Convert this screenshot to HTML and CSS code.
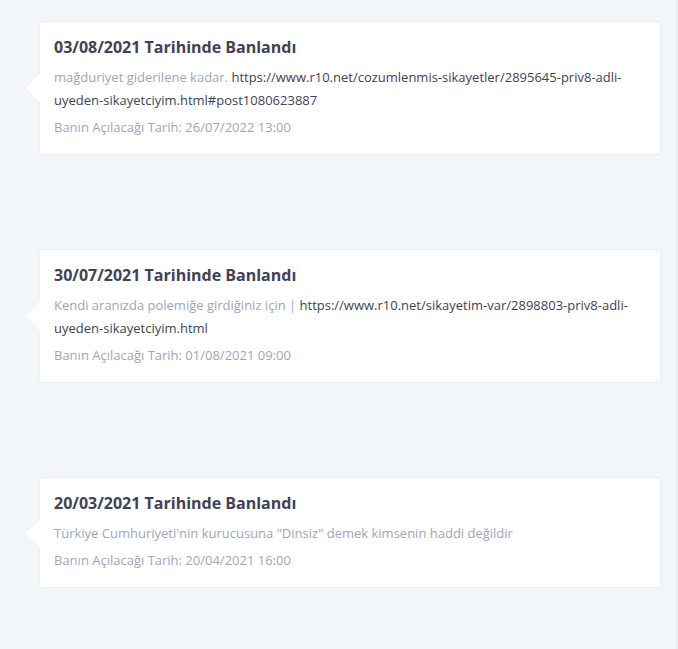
FILE: index.html
```html
<!DOCTYPE html>
<html lang="tr">
<head>
    <meta charset="UTF-8">
    <meta name="viewport" content="width=device-width, initial-scale=1.0">
    <title>Ban Geçmişi</title>
    <link rel="stylesheet" href="styles.css">
</head>
<body>

    <div class="timeline">

        <div class="ban-item">
            <h3 class="ban-title">03/08/2021 Tarihinde Banlandı</h3>
            <p class="ban-reason">mağduriyet giderilene kadar. <a href="#">https://www.r10.net/cozumlenmis-sikayetler/2895645-priv8-adli-uyeden-sikayetciyim.html#post1080623887</a></p>
            <p class="ban-date">Banın Açılacağı Tarih: 26/07/2022 13:00</p>
        </div>

        <div class="ban-item">
            <h3 class="ban-title">30/07/2021 Tarihinde Banlandı</h3>
            <p class="ban-reason">Kendi aranızda polemiğe girdiğiniz için | <a href="#">https://www.r10.net/sikayetim-var/2898803-priv8-adli-uyeden-sikayetciyim.html</a></p>
            <p class="ban-date">Banın Açılacağı Tarih: 01/08/2021 09:00</p>
        </div>

        <div class="ban-item">
            <h3 class="ban-title">20/03/2021 Tarihinde Banlandı</h3>
            <p class="ban-reason">Türkiye Cumhuriyeti'nin kurucusuna "Dinsiz" demek kimsenin haddi değildir</p>
            <p class="ban-date">Banın Açılacağı Tarih: 20/04/2021 16:00</p>
        </div>

    </div>

</body>
</html>
```

FILE: styles.css
```css
body {
    margin: 0;
    background-color: #f3f6f9;
    font-family: "Open Sans", Arial, sans-serif;
}

.timeline {
    width: 677px;
    min-height: 649px;
    box-sizing: border-box;
    padding: 21px 15px 0 39px;
    border-right: 1px solid #e4e8ee;
    display: flex;
    flex-direction: column;
    gap: 94px;
}

.ban-item {
    position: relative;
    background-color: #fff;
    border: 1px solid #ebedf2;
    border-radius: 3px;
    padding: 13px 15px 15px 14px;
}

/* little arrow on the left side of the card */
.ban-item::before {
    content: "";
    position: absolute;
    left: -14px;
    top: 50%;
    margin-top: -14px;
    border-top: 14px solid transparent;
    border-bottom: 14px solid transparent;
    border-right: 14px solid #fff;
}

.ban-title {
    margin: 0 0 7px 0;
    font-size: 16px;
    line-height: 24px;
    font-weight: 700;
    color: #3f4254;
}

.ban-reason {
    margin: 0 0 4px 0;
    font-size: 13px;
    line-height: 23px;
    color: #a1a5b7;
}

.ban-reason a {
    color: #3f4254;
    text-decoration: none;
}

.ban-date {
    margin: 0;
    font-size: 13px;
    line-height: 23px;
    color: #a1a5b7;
}
```
